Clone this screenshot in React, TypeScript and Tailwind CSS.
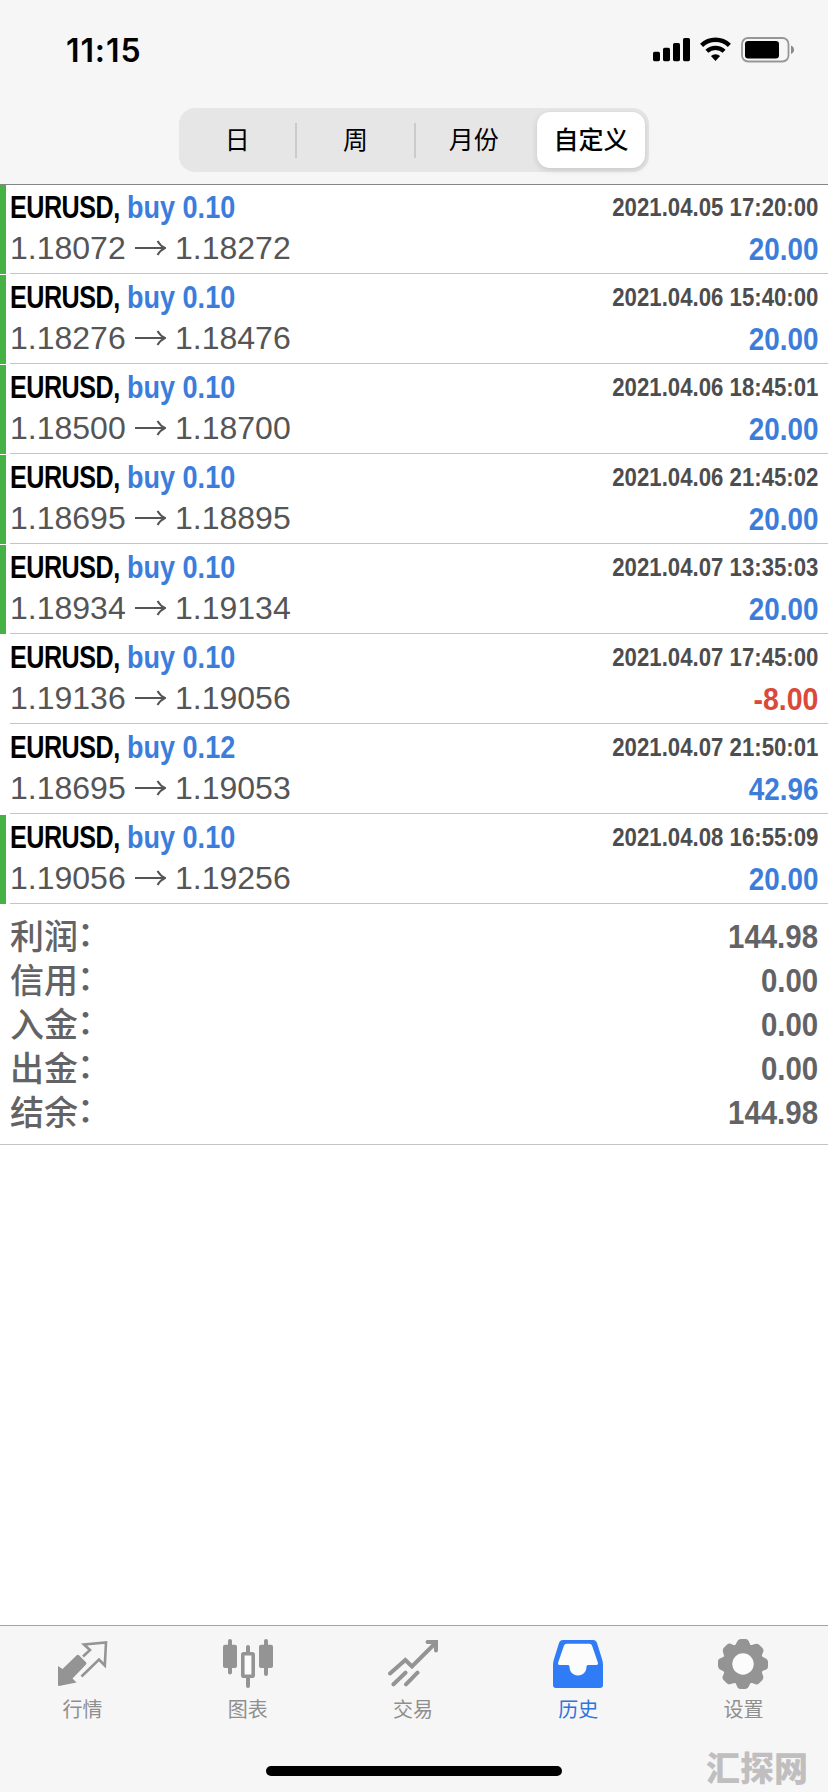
import React from 'react';

const deals = [
  { lots: '0.10', open: '1.18072', close: '1.18272', time: '2021.04.05 17:20:00', profit: '20.00', tp: true },
  { lots: '0.10', open: '1.18276', close: '1.18476', time: '2021.04.06 15:40:00', profit: '20.00', tp: true },
  { lots: '0.10', open: '1.18500', close: '1.18700', time: '2021.04.06 18:45:01', profit: '20.00', tp: true },
  { lots: '0.10', open: '1.18695', close: '1.18895', time: '2021.04.06 21:45:02', profit: '20.00', tp: true },
  { lots: '0.10', open: '1.18934', close: '1.19134', time: '2021.04.07 13:35:03', profit: '20.00', tp: true },
  { lots: '0.10', open: '1.19136', close: '1.19056', time: '2021.04.07 17:45:00', profit: '-8.00', tp: false },
  { lots: '0.12', open: '1.18695', close: '1.19053', time: '2021.04.07 21:50:01', profit: '42.96', tp: false },
  { lots: '0.10', open: '1.19056', close: '1.19256', time: '2021.04.08 16:55:09', profit: '20.00', tp: true },
];

const totals = [
  ['利润', '144.98'],
  ['信用', '0.00'],
  ['入金', '0.00'],
  ['出金', '0.00'],
  ['结余', '144.98'],
];

function StatusBar() {
  return (
    <div className="flex h-[108px] items-start justify-between pl-[66px] pr-[33px] pt-[37px]">
      <span className="font-['Inter'] text-[32px] font-semibold leading-[27px] tracking-[0.9px] text-black">11:15</span>
      <div className="flex gap-[10px]">
        <svg width="37" height="26" viewBox="0 0 37 26">
          <rect x="0" y="14.7" width="7" height="9.5" rx="1.6" />
          <rect x="10" y="10.7" width="7" height="13.5" rx="1.6" />
          <rect x="20" y="6" width="7" height="18.2" rx="1.6" />
          <rect x="30" y="1" width="7" height="23.2" rx="1.6" />
        </svg>
        <svg width="31" height="26" viewBox="0 0 31 26" fill="none" stroke="#000">
          <path d="M1.6 8.3a20 20 0 0 1 27.8 0" strokeWidth="4.4" />
          <path d="M6.9 14.3a12.4 12.4 0 0 1 17.2 0" strokeWidth="4.2" />
          <path d="M15.5 24l-4.6-4.9a6.8 6.8 0 0 1 9.2 0z" fill="#000" stroke="none" />
        </svg>
        <svg width="54" height="26" viewBox="0 0 54 26">
          <rect x="1" y="1" width="46.5" height="23.5" rx="6" fill="none" stroke="#979797" strokeWidth="1.8" />
          <rect x="4" y="4" width="34" height="17.5" rx="3.2" />
          <path d="M50 8.5q3 1.2 3 4.2t-3 4.2z" fill="#8a8a8a" />
        </svg>
      </div>
    </div>
  );
}

function PeriodSwitch() {
  return (
    <div className="mx-auto flex h-[64px] w-[470px] items-center rounded-[16px] bg-[#e6e6e7] text-[25px] text-black">
      <div className="flex-1 pt-[2px] text-center">日</div>
      <div className="h-[35px] w-[2px] bg-[#cbcbcd]" />
      <div className="flex-1 pt-[2px] text-center">周</div>
      <div className="h-[35px] w-[2px] bg-[#cbcbcd]" />
      <div className="flex-1 pt-[2px] text-center">月份</div>
      <div className="ml-[5px] mr-[4px] flex h-[56px] w-[108px] items-center justify-center rounded-[13px] bg-white pt-[2px] font-medium shadow-[0_2px_6px_rgba(0,0,0,0.14)]">
        自定义
      </div>
    </div>
  );
}

function DealRow({ deal }: { deal: (typeof deals)[number] }) {
  return (
    <div className="flex h-[90px]">
      <div className={deal.tp ? 'mr-[4px] mt-px h-[88.500px] w-[6px] bg-[#46b145]' : 'mr-[4px] mt-px h-[88.500px] w-[6px]'} />
      <div className="flex flex-1 justify-between border-b border-[#c4c4c6] pr-[10px]">
        <div>
          <div className="flex h-[46px] whitespace-nowrap pt-[5px] text-[32px] font-bold leading-[36px]">
            <span className="w-[117px] origin-left scale-x-[0.785] tracking-[-0.6px] text-black">EURUSD,</span>
            <span className="origin-left scale-x-[0.845] text-[#3c7ddb]">buy {deal.lots}</span>
          </div>
          <div className="flex items-center text-[32px] leading-[36px] text-[#555556]">
            <span className="w-[125px]">{deal.open}</span>
            <svg width="31" height="18" viewBox="0 0 31 18" fill="none" stroke="#555556" strokeWidth="2">
              <path d="M0 9h29.5M22.5 2q3 5 7.5 7q-4.500 2-7.500 7" />
            </svg>
            <span className="ml-[9px]">{deal.close}</span>
          </div>
        </div>
        <div className="whitespace-nowrap text-right font-bold">
          <div className="h-[46px] origin-right scale-x-[0.854] pt-[5px] text-[26px] leading-[36px] text-[#4d4d4f]">{deal.time}</div>
          <div
            className={
              deal.profit.startsWith('-')
                ? 'origin-right scale-x-[0.89] text-[32px] leading-[38px] text-[#d94a3a]'
                : 'origin-right scale-x-[0.87] text-[32px] leading-[38px] text-[#3c7ddb]'
            }
          >
            {deal.profit}
          </div>
        </div>
      </div>
    </div>
  );
}

function Summary() {
  return (
    <div className="h-[241px] border-b border-[#c4c4c6] px-[10px] pt-[10px] text-[34px] text-[#636365]">
      {totals.map(([label, value]) => (
        <div key={label} className="flex h-[44px] items-center justify-between leading-[44px]">
          <span className="pt-[2px] font-medium">
            {label}
            <span className="inline-block -translate-x-px -translate-y-[3px]">：</span>
          </span>
          <span className="origin-right scale-x-[0.865] font-bold">{value}</span>
        </div>
      ))}
    </div>
  );
}

function QuotesIcon() {
  return (
    <svg width="50" height="50" viewBox="0 0 50 50">
      <path d="M0 27l4.500 3L19 16q1-.7 2 .3l7 7q1 1.200 0 2.200L14.500 39.500l4 4L1 47q-1 0-1-1z" fill="#949494" />
      <path d="M25 17.500l7-6.500-6-5.500 22-2-1.200 23-5.800-6L23.500 37.500" fill="none" stroke="#949494" strokeWidth="2.600" />
    </svg>
  );
}

function ChartIcon() {
  return (
    <svg width="50" height="50" viewBox="0 0 50 50" fill="#949494">
      <rect x="0" y="5.700" width="14" height="23.300" rx="2" />
      <rect x="5" y="0" width="4" height="35.500" rx="2" />
      <rect x="36" y="5.700" width="14" height="23.300" rx="2" />
      <rect x="41" y="0" width="4" height="37" rx="2" />
      <rect x="23" y="6" width="4" height="9" rx="2" />
      <rect x="23" y="37" width="4" height="12" rx="2" />
      <rect x="19.800" y="14.800" width="10.400" height="22.400" rx="1" fill="#fcfcfc" stroke="#949494" strokeWidth="3.600" />
    </svg>
  );
}

function TradeIcon() {
  return (
    <svg width="50" height="50" viewBox="0 0 50 50" fill="none" stroke="#949494" strokeWidth="4" strokeLinecap="round">
      <path d="M2 34.500L17.300 21l6.700 6.500L47 4.500M39.500 3H48v8.500M5.500 45.300l12-11.600M18 45.300l11.500-11.600" />
    </svg>
  );
}

function HistoryIcon() {
  return (
    <svg width="50" height="50" viewBox="0 0 50 50">
      <path d="M10 1h30q3 0 4 3l5 16q1 3 1 6v20q0 3-3 3H3q-3 0-3-3V26q0-3 1-6L6 4q1-3 4-3z" fill="#2f7cf6" />
      <path
        d="M13.500 4.700q-1.800 0-2.500 1.800L5 24q-.3 2 1.500 2H15q1.500 0 1.500 1.500C16.500 33 20 36.500 25 36.500s8.500-3.500 8.500-9Q33.500 26 35 26h8.500q1.800 0 1.500-2L39 6.500q-.7-1.800-2.500-1.800z"
        fill="#fcfcfc"
      />
    </svg>
  );
}

function SettingsIcon() {
  return (
    <svg width="50" height="50" viewBox="0 0 50 50" fill="#949494">
      <circle cx="25" cy="25" r="20.300" />
      {[0, 45, 90, 135, 180, 225, 270, 315].map((angle) => (
        <path key={angle} d="M16 7.500Q18 5.500 18.900 3T22.500 0h5q2.700 0 3.600 3t2.900 4.500z" transform={`rotate(${angle} 25 25)`} />
      ))}
      <circle cx="25" cy="25" r="10.700" fill="#fcfcfc" />
    </svg>
  );
}

const tabs = [
  { label: '行情', icon: <QuotesIcon /> },
  { label: '图表', icon: <ChartIcon /> },
  { label: '交易', icon: <TradeIcon /> },
  { label: '历史', icon: <HistoryIcon />, active: true },
  { label: '设置', icon: <SettingsIcon /> },
];

function TabBar() {
  return (
    <nav className="relative h-[167px] border-t border-[#a3a5a3] bg-[#f6f6f6]">
      <div className="flex pr-[2px] pt-[13px]">
        {tabs.map((tab) => (
          <div key={tab.label} className="flex flex-1 flex-col items-center gap-[11px]">
            {tab.icon}
            <span className={tab.active ? 'text-[20px] leading-5 text-[#2f74dc]' : 'text-[20px] leading-5 text-[#8f8f8f]'}>
              {tab.label}
            </span>
          </div>
        ))}
      </div>
      <div className="mx-auto mt-[46px] h-[10px] w-[296px] rounded-full bg-black" />
      <span className="absolute bottom-[5px] right-[20px] text-[34px] font-black leading-[36px] text-[#c0bebf]">汇探网</span>
    </nav>
  );
}

export default function App() {
  return (
    <div className="flex h-[1792px] w-[828px] flex-col overflow-hidden bg-white font-['Liberation_Sans','Noto_Sans_CJK_SC',sans-serif]">
      <header className="h-[185px] border-b border-[#868686] bg-[#f6f6f6]">
        <StatusBar />
        <PeriodSwitch />
      </header>
      <main className="-mt-px flex-1">
        {deals.map((deal) => (
          <DealRow key={deal.time} deal={deal} />
        ))}
        <Summary />
      </main>
      <TabBar />
    </div>
  );
}
